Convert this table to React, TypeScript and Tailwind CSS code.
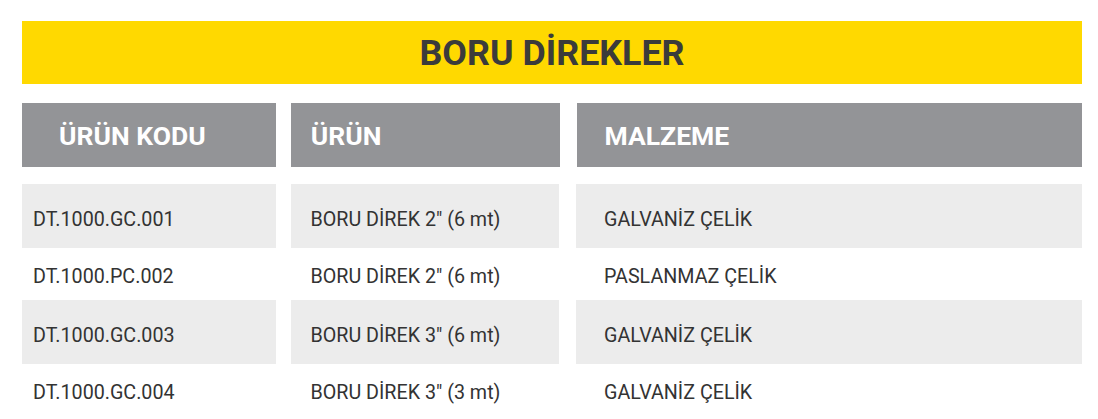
import React from "react";

const rows = [
  ["DT.1000.GC.001", 'BORU DİREK 2" (6 mt)', "GALVANİZ ÇELİK"],
  ["DT.1000.PC.002", 'BORU DİREK 2" (6 mt)', "PASLANMAZ ÇELİK"],
  ["DT.1000.GC.003", 'BORU DİREK 3" (6 mt)', "GALVANİZ ÇELİK"],
  ["DT.1000.GC.004", 'BORU DİREK 3" (3 mt)', "GALVANİZ ÇELİK"],
];

export default function App() {
  return (
    <div
      className="w-[1098px] h-[419px] overflow-hidden bg-white pt-[21px]"
      style={{ fontFamily: "Roboto, 'Liberation Sans', sans-serif" }}
    >
      <div className="ml-[22px] w-[1060px]">
        <div className="h-[63px] bg-[#ffd900] flex items-center justify-center">
          <h1 className="text-[35.8px] font-bold text-[#3b3b3b] leading-none pt-[2px]">
            BORU DİREKLER
          </h1>
        </div>
        <div className="mt-[19px] flex">
          <div className="w-[254px] h-[64px] bg-[#939497] flex items-center pl-[37px] pt-[2px] text-white text-[26.5px] font-bold leading-none">
            ÜRÜN KODU
          </div>
          <div className="ml-[15px] w-[269px] h-[64px] bg-[#939497] flex items-center pl-[20px] pt-[2px] text-white text-[26.5px] font-bold leading-none">
            ÜRÜN
          </div>
          <div className="ml-[17px] w-[506px] h-[64px] bg-[#939497] flex items-center pl-[28px] pt-[2px] text-white text-[26.5px] font-bold leading-none">
            MALZEME
          </div>
        </div>
        <div className="mt-[17px] flex flex-col">
          {rows.map((r, i) => {
            const odd = i % 2 === 0;
            const cls = `${odd ? "h-[64px] bg-[#ececec] pt-[8px]" : "h-[52px] bg-white pt-[6px]"} flex items-center text-[19.7px] text-[#333333] leading-none`;
            return (
              <div key={i} className="flex">
                <div className={`${cls} w-[254px] pl-[11px]`}>{r[0]}</div>
                <div className={`${cls} ml-[15px] w-[269px] pl-[20px]`}>{r[1]}</div>
                <div className={`${cls} ml-[17px] w-[507px] pl-[28px]`}>{r[2]}</div>
              </div>
            );
          })}
        </div>
      </div>
    </div>
  );
}
